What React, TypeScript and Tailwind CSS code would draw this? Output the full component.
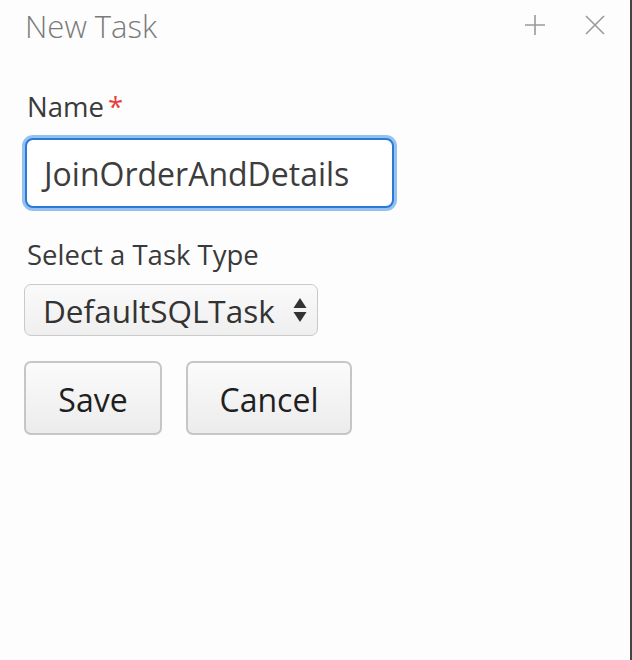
import React from 'react';

const App: React.FC = () => {
  return (
    <div className="flex h-[660px] w-[632px] bg-[#fdfdfd] font-['Open_Sans',sans-serif]">
      <div className="flex-1 px-6">
        {/* Header */}
        <div className="flex h-[52px] items-center justify-between pt-[1px]">
          <h2 className="ml-[1px] text-[31px] font-light leading-none text-[#7a7a7a]">New Task</h2>
          <div className="mb-[4px] flex items-center gap-[38px] text-[#9a9a9a]">
            <svg width="22" height="22" viewBox="0 0 22 22" fill="none" stroke="currentColor" strokeWidth="1.6">
              <path d="M11 1v20M1 11h20" />
            </svg>
            <svg width="22" height="22" viewBox="0 0 22 22" fill="none" stroke="currentColor" strokeWidth="1.6">
              <path d="M2 2l18 18M20 2L2 20" />
            </svg>
          </div>
        </div>

        {/* Name field */}
        <label className="ml-[3px] mt-[41px] block text-[27.5px] leading-none text-[#3a3a3a]">
          Name<span className="ml-[4px] text-[#e8413c]">*</span>
        </label>
        <div className="mt-[17px] ml-[1px] w-[369px] rounded-[8px] border-[2px] border-[#2a7bd8] bg-white px-[17px] pb-[12px] pt-[14px] shadow-[0_0_0_3px_#95c1f0]">
          <span className="block text-[32px] leading-[40px] text-[#3d3d3d]">JoinOrderAndDetails</span>
        </div>

        {/* Task type */}
        <label className="ml-[3px] mt-[33px] block text-[27.5px] leading-none text-[#3a3a3a]">Select a Task Type</label>
        <div className="mt-[16px] flex h-[52px] w-[294px] items-center justify-between rounded-[7px] border border-[#c9c9c9] bg-gradient-to-b from-[#fafafa] to-[#efefef] pl-[18px] pr-[10px]">
          <span className="pt-[2px] text-[31.5px] leading-none text-[#333]">DefaultSQLTask</span>
          <svg width="14" height="26" viewBox="0 0 14 26" fill="#333">
            <path d="M7 1l6.5 10H0.5z" />
            <path d="M7 25l6.5-10H0.5z" />
          </svg>
        </div>

        {/* Actions */}
        <div className="mt-[25px] flex gap-[24px]">
          <button className="h-[74px] w-[138px] rounded-[7px] border-[2px] border-[#c6c6c6] bg-gradient-to-b from-[#fbfbfb] to-[#ececec] pt-[3px] text-[32px] leading-none text-[#1f1f1f]">
            Save
          </button>
          <button className="h-[74px] w-[166px] rounded-[7px] border-[2px] border-[#c6c6c6] bg-gradient-to-b from-[#fbfbfb] to-[#ececec] pt-[3px] text-[32px] leading-none text-[#1f1f1f]">
            Cancel
          </button>
        </div>
      </div>
      <div className="w-[2px] bg-[#444]" />
    </div>
  );
};

export default App;
